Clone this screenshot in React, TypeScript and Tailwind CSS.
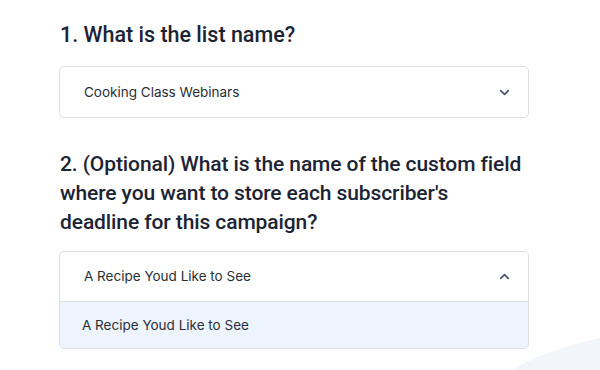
import { ChevronDown, ChevronUp } from 'lucide-react';

export default function App() {
  return (
    <div className="relative h-[370px] w-[600px] overflow-hidden bg-white font-['Inter',sans-serif]">
      <svg className="pointer-events-none absolute bottom-0 right-0" width="88" height="34" viewBox="0 0 88 34">
        <path d="M0 34 C 20 22, 50 10, 88 2 L88 34 Z" fill="#f2f5f9" />
      </svg>
      <div className="relative flex w-[529px] flex-col pl-[59px] pt-[20px]">
        <h2 className="pl-px font-['Roboto',sans-serif] text-[21.5px] font-medium leading-[29px] text-[#1c2434]">1. What is the list name?</h2>
        <div className="mt-[17px] flex h-[52px] items-center justify-between rounded-[5px] border border-[#dcdfe3] bg-white pl-[24px] pr-[16px]">
          <span className="text-[13.5px] text-[#2a2f36]">Cooking Class Webinars</span>
          <ChevronDown className="h-[15px] w-[15px] text-[#4b5563]" strokeWidth={2.75} />
        </div>
        <h2 className="mt-[32px] pl-px font-['Roboto',sans-serif] text-[21px] font-medium leading-[29px] tracking-[-0.1px] text-[#1c2434]">
          2. (Optional) What is the name of the custom field where you want to store each subscriber's deadline for this campaign?
        </h2>
        <div className="mt-[14px] flex flex-col overflow-hidden rounded-[5px] border border-[#dcdfe3] bg-white">
          <div className="flex h-[50px] items-center justify-between border-b border-[#dcdfe3] pl-[24px] pr-[16px]">
            <span className="text-[13.5px] text-[#2a2f36]">A Recipe Youd Like to See</span>
            <ChevronUp className="h-[15px] w-[15px] text-[#4b5563]" strokeWidth={2.75} />
          </div>
          <div className="flex h-[46px] items-center bg-[#edf4fe] pl-[22px]">
            <span className="text-[13.5px] text-[#2a2f36]">A Recipe Youd Like to See</span>
          </div>
        </div>
      </div>
    </div>
  );
}
